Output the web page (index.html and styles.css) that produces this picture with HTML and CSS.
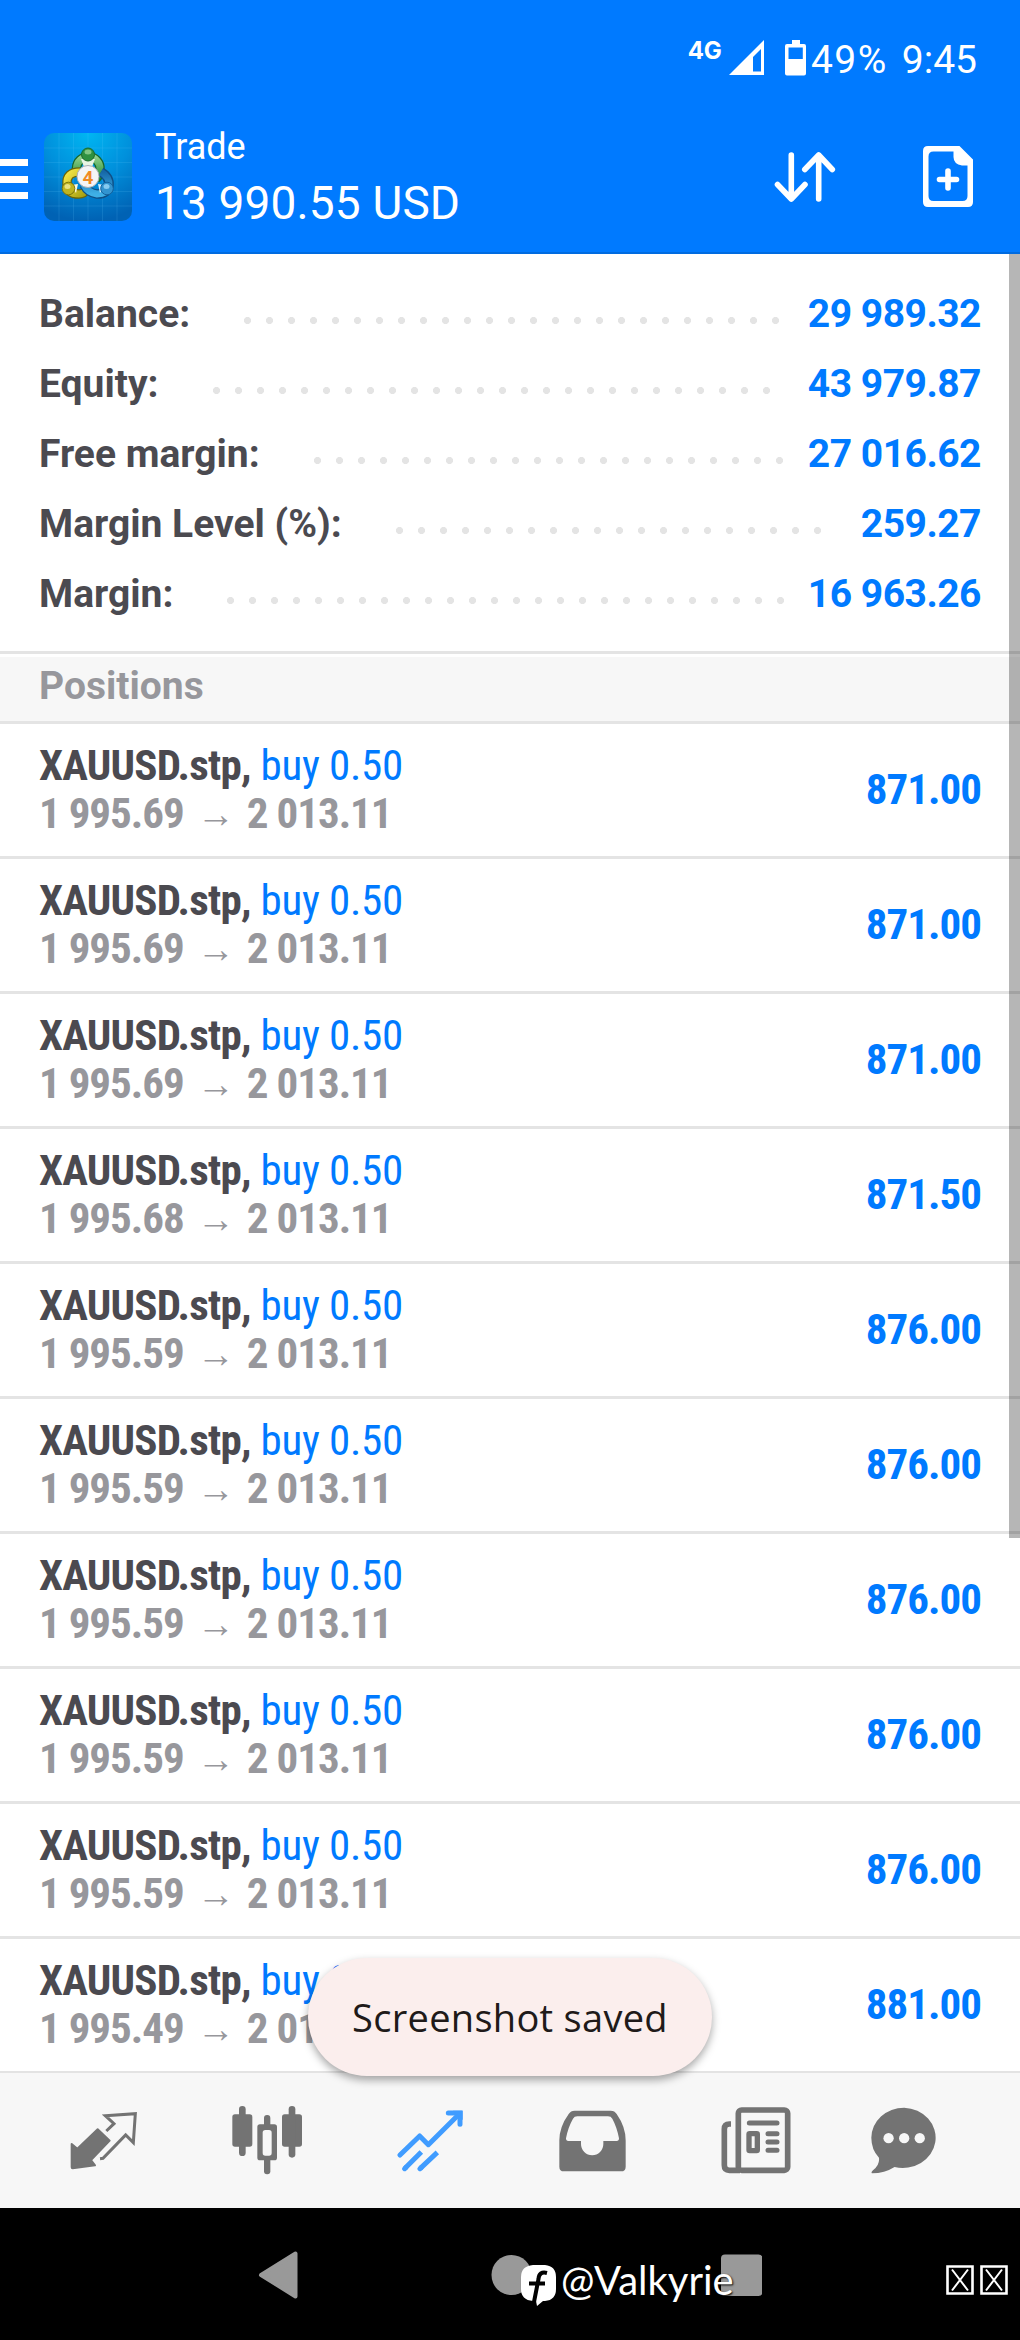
FILE: index.html
```
<!DOCTYPE html>
<html lang="en">
<head>
    <meta charset="UTF-8">
    <meta name="viewport" content="width=device-width, initial-scale=1.0">
    <title>Trade</title>
    <link rel="stylesheet" href="styles.css">
</head>
<body>
    <div class="phone">
        <div class="status-bar">
            <span class="network">4G</span>
            <svg class="signal" width="36" height="36" viewBox="0 0 36 36">
                <path fill="#fff" fill-rule="evenodd" d="M0 35L35 0V35ZM24 31.5H32V9L24 17Z"/>
            </svg>
            <svg class="battery" width="21" height="36" viewBox="0 0 21 36">
                <path fill="#fff" fill-rule="evenodd" d="M7 0H15V4H19Q21 4 21 6V33.500Q21 35.500 19 35.500H2Q0 35.500 0 33.500V6Q0 4 2 4H7ZM3.500 7.500V19H17.800V7.500Z"/>
            </svg>
            <span class="percent">49%</span>
            <span class="clock">9:45</span>
        </div>

        <header>
            <div class="hamburger"><i></i><i></i><i></i></div>
            <svg class="logo" width="88" height="88" viewBox="0 0 88 88">
                <defs>
                    <radialGradient id="sky" cx=".5" cy="0" r="1">
                        <stop offset="0" stop-color="#00b6f2"/>
                        <stop offset=".5" stop-color="#0090dc"/>
                        <stop offset="1" stop-color="#0062b4"/>
                    </radialGradient>
                    <linearGradient id="green" x2="0" y2="1">
                        <stop offset="0" stop-color="#8fd08a"/>
                        <stop offset="1" stop-color="#1f8a35"/>
                    </linearGradient>
                    <linearGradient id="yellow" x2="1" y2="1">
                        <stop offset="0" stop-color="#f3e545"/>
                        <stop offset="1" stop-color="#a8a012"/>
                    </linearGradient>
                    <linearGradient id="blue" x2="0" y2="1">
                        <stop offset="0" stop-color="#1668a8"/>
                        <stop offset="1" stop-color="#3fb0e6"/>
                    </linearGradient>
                </defs>
                <rect width="88" height="88" rx="10" fill="url(#sky)"/>
                <path d="M15 0V88M29.500 0V88M44 0V88M58.500 0V88M73 0V88M0 15H88M0 29.500H88M0 44H88M0 58.500H88M0 73H88" stroke="#6cd0ff" stroke-opacity=".15" fill="none"/>
                <path d="M32.500 40V35A11.500 11.500 0 1 1 56 36Q56 42 52 46" fill="none" stroke="#17662a" stroke-width="9.500"/>
                <path d="M32.500 40V35A11.500 11.500 0 1 1 56 36Q56 42 52 46" fill="none" stroke="url(#green)" stroke-width="7"/>
                <path d="M36 39Q22 39 23 51Q23 61 35 61Q40 61 42 57" fill="none" stroke="#6b6508" stroke-width="9.500"/>
                <path d="M36 39Q22 39 23 51Q23 61 35 61Q40 61 42 57" fill="none" stroke="url(#yellow)" stroke-width="7"/>
                <path d="M57 39Q66 44 65 53Q63 61 53 61Q44 60 40 52" fill="none" stroke="#0f4f85" stroke-width="9.500"/>
                <path d="M57 39Q66 44 65 53Q63 61 53 61Q44 60 40 52" fill="none" stroke="url(#blue)" stroke-width="7"/>
                <path d="M40 34L37 26H51L48 34Z" fill="#e8f5e4"/>
                <path d="M27 52L34 51L32 60Z" fill="#fffbe0"/>
                <path d="M61 52L54 51L56 60Z" fill="#d8f0ff"/>
                <circle cx="44" cy="21.500" r="6.500" fill="#2f9140" stroke="#1a6a2a"/>
                <ellipse cx="44" cy="19" rx="3.500" ry="2.500" fill="#a2dba0" opacity=".7"/>
                <circle cx="24.500" cy="55.500" r="6.300" fill="#bdb420" stroke="#7b750c"/>
                <ellipse cx="23.500" cy="53.500" rx="3" ry="2.500" fill="#f4ee9a" opacity=".8"/>
                <circle cx="63" cy="55.500" r="6.300" fill="#3294d0" stroke="#14619c"/>
                <ellipse cx="62.500" cy="53.500" rx="3" ry="2.500" fill="#9bd7f7" opacity=".8"/>
                <circle cx="44" cy="43.500" r="11" fill="#f4f4f6" stroke="#a9adb3"/>
                <text class="logo-number" x="44" y="50.500">4</text>
            </svg>
            <div class="title">
                <div class="title-name">Trade</div>
                <div class="title-profit">13 990.55 USD</div>
            </div>
            <svg class="sort" width="62" height="52" viewBox="774 151 62 52" fill="none" stroke="#fff" stroke-width="5.600" stroke-linecap="round" stroke-linejoin="round">
                <path d="M791.300 155V199M777.500 184.500L791.300 199L805 184.500"/>
                <path d="M818.700 199V155M804.800 169.500L818.700 155L832.300 169.500"/>
            </svg>
            <svg class="new-order" width="50" height="61" viewBox="0 0 50 61">
                <path fill="#fff" fill-rule="evenodd" d="M5 0H36.500L50 13.500V56Q50 61 45 61H5Q0 61 0 56V5Q0 0 5 0ZM10.500 5.500Q5.500 5.500 5.500 10.500V50Q5.500 55 10.500 55H39.500Q44.500 55 44.500 50V19.500H39Q30.500 18 30.500 11V5.500Z"/>
                <path d="M25 25V42M16.500 33.500H33.500" stroke="#fff" stroke-width="5.600" stroke-linecap="round"/>
            </svg>
        </header>

        <main>
            <div class="account">
                <div class="account-row"><span>Balance:</span><div class="leader"><div class="dots"></div></div><b>29 989.32</b></div>
                <div class="account-row"><span>Equity:</span><div class="leader"><div class="dots"></div></div><b>43 979.87</b></div>
                <div class="account-row"><span>Free margin:</span><div class="leader"><div class="dots"></div></div><b>27 016.62</b></div>
                <div class="account-row"><span>Margin Level (%):</span><div class="leader"><div class="dots"></div></div><b>259.27</b></div>
                <div class="account-row"><span>Margin:</span><div class="leader"><div class="dots"></div></div><b>16 963.26</b></div>
            </div>
            <h2>Positions</h2>
            <div id="positions"></div>
            <div class="scrollbar"></div>
            <div class="toast">Screenshot saved</div>
        </main>

        <nav class="tabs">
            <div class="tab">
                <svg width="68" height="60" viewBox="89 122 204 180">
                    <path fill="#737373" stroke="#737373" stroke-width="6" stroke-linejoin="round" d="M172 177L208 211L152 269L164 285L97 294Q94 294 94 291V221L111 235Z"/>
                    <path fill="none" stroke="#737373" stroke-width="9" d="M198 182L221 160L195 136L285 130L279 217L256 194L188 264L179 265"/>
                </svg>
            </div>
            <div class="tab">
                <svg width="70" height="69" viewBox="573 107 210 207">
                    <g fill="#737373">
                        <rect x="574" y="132" width="60" height="97" rx="8"/>
                        <rect x="594" y="107" width="20" height="150" rx="10"/>
                        <rect x="723" y="132" width="60" height="97" rx="8"/>
                        <rect x="743" y="107" width="20" height="155" rx="10"/>
                        <rect x="649" y="162" width="59" height="108" rx="8"/>
                        <rect x="669" y="134" width="19" height="178" rx="9"/>
                    </g>
                    <rect x="665" y="179" width="27" height="77" rx="8" fill="#f7f7f7"/>
                </svg>
            </div>
            <div class="tab">
                <svg width="66" height="62" viewBox="1068 115 198 186" fill="none" stroke="#409cff" stroke-width="15">
                    <path stroke-linecap="round" stroke-linejoin="round" d="M1077 250L1136 193L1162 219L1254 128"/>
                    <path stroke-linecap="round" d="M1222 124H1257V158"/>
                    <path d="M1236 117H1265V145Z" fill="#409cff" stroke="none"/>
                    <path d="M1092 290L1141 241M1138 290L1189 242"/>
                    <path stroke-linecap="round" d="M1091 291L1094 288M1137 291L1140 288"/>
                </svg>
            </div>
            <div class="tab">
                <svg width="67" height="62" viewBox="117 114 201 186">
                    <path fill="#737373" fill-rule="evenodd" d="M164 116H272Q284 116 290 126Q317 165 317 205V284Q317 298 303 298H132Q118 298 118 284V205Q118 165 146 126Q152 116 164 116ZM172 133Q163 133 159 140Q144 166 138 199Q138 207 145 207H183V216A33 33 0 0 0 250 216V207H290Q297 207 297 199Q291 166 277 140Q273 133 264 133Z"/>
                </svg>
            </div>
            <div class="tab">
                <svg width="70" height="67" viewBox="603 107 210 201" fill="none" stroke="#737373" stroke-width="17">
                    <rect x="655" y="116" width="148" height="181" rx="10"/>
                    <path d="M633 158H628Q613 158 613 173V282Q613 297 628 297H660"/>
                    <path stroke-width="15" stroke-linecap="round" d="M688 155H771M744 187H771M744 212H771M744 237H771"/>
                    <rect x="687" y="187" width="25" height="51" rx="2" stroke-width="16"/>
                </svg>
            </div>
            <div class="tab">
                <svg width="66" height="67" viewBox="1049 107 199 200">
                    <path fill="#737373" d="M1149 108A99 91 0 1 1 1120 287Q1090 306 1052 306Q1048 303 1055 297Q1076 280 1073 259Q1050 235 1050 199A99 91 0 0 1 1149 108Z"/>
                    <g fill="#f7f7f7"><circle cx="1102" cy="200" r="15.500"/><circle cx="1149" cy="200" r="15.500"/><circle cx="1196" cy="200" r="15.500"/></g>
                </svg>
            </div>
        </nav>

        <footer>
            <svg class="nav-buttons" width="504" height="50" viewBox="257 2253 504 50" fill="#999">
                <path stroke="#999" stroke-width="4" stroke-linejoin="round" d="M260 2278L294.500 2256.500V2299.500Z"/>
                <circle cx="510.500" cy="2278" r="20"/>
                <rect x="720" y="2257.500" width="41.500" height="41.500" rx="4"/>
            </svg>
            <div class="credit">
                <svg width="36" height="42" viewBox="0 0 36 42">
                    <path fill="#fff" d="M12 0H24Q35 1 35 12V24Q35 35 24 36H22L16 41L15 36H12Q0 35 0 24V12Q0 1 12 0Z"/>
                    <path fill="none" stroke="#000" stroke-width="4" d="M26 8Q18 6 17.500 14L13 37M8 18.500H24"/>
                </svg>
                <span>@Valkyrie</span>
            </div>
            <svg class="missing" width="62" height="30" viewBox="0 0 62 30" fill="none" stroke="#fff">
                <path stroke-width="2.600" d="M1.500 1.500H26.500V28.500H1.500ZM35.500 1.500H60.500V28.500H35.500Z"/>
                <path stroke-width="2" d="M6 4.500L22 25.500M22 4.500L6 25.500M40 4.500L56 25.500M56 4.500L40 25.500"/>
            </svg>
        </footer>
    </div>

    <script>
        const positions = [
            { open: "1 995.69", profit: "871.00" },
            { open: "1 995.69", profit: "871.00" },
            { open: "1 995.69", profit: "871.00" },
            { open: "1 995.68", profit: "871.50" },
            { open: "1 995.59", profit: "876.00" },
            { open: "1 995.59", profit: "876.00" },
            { open: "1 995.59", profit: "876.00" },
            { open: "1 995.59", profit: "876.00" },
            { open: "1 995.59", profit: "876.00" },
            { open: "1 995.49", profit: "881.00" }
        ];

        const positionsDiv = document.getElementById("positions");

        positions.forEach(item => {
            const row = document.createElement("div");
            row.className = "position";
            row.innerHTML = `
                <div class="position-info">
                    <div class="symbol"><b>XAUUSD.stp,</b> <span class="side">buy 0.50</span></div>
                    <div class="prices">
                        <span>${item.open}</span>
                        <span class="arrow">→</span>
                        <span>2 013.11</span>
                    </div>
                </div>
                <div class="profit">${item.profit}</div>
            `;
            positionsDiv.appendChild(row);
        });
    </script>
</body>
</html>
```

FILE: styles.css
```
* {
    box-sizing: border-box;
}

body {
    margin: 0;
    background-color: #fff;
    font-family: Roboto, "Liberation Sans", sans-serif;
    color: #4b4a50;
}

svg {
    display: block;
    flex: none;
}

.phone {
    display: flex;
    flex-direction: column;
    width: 1020px;
    height: 2340px;
    overflow: hidden;
}

/* Android status bar */
.status-bar {
    display: flex;
    align-items: flex-start;
    height: 119px;
    padding: 40px 43px 0 0;
    justify-content: flex-end;
    background-color: #007aff;
    color: #fff;
    font-weight: 400;
    font-size: 39px;
    line-height: 41px;
    white-space: nowrap;
}

.network {
    font-family: Inter, sans-serif;
    font-weight: 700;
    font-size: 24px;
    line-height: 21px;
    margin-right: 7px;
}

.signal {
    margin-right: 20px;
}

.battery {
    margin-right: 5px;
}

.percent {
    letter-spacing: 1.5px;
    margin-right: 14px;
}

/* App header */
header {
    display: flex;
    align-items: flex-start;
    height: 135px;
    background-color: #007aff;
    border-bottom: 2px solid #006be0;
    color: #fff;
}

.hamburger {
    display: flex;
    flex-direction: column;
    gap: 9.500px;
    width: 28px;
    margin: 40px 16px 0 0;
}

.hamburger i {
    height: 7px;
    background-color: #fff;
}

.logo {
    margin-top: 14px;
}

.logo-number {
    font-size: 19px;
    font-weight: 700;
    fill: #f08a24;
    text-anchor: middle;
}

.title {
    flex: 1;
    padding: 3px 0 0 23px;
    white-space: nowrap;
}

.title-name {
    font-size: 36px;
    line-height: 51px;
}

.title-profit {
    font-size: 46px;
    line-height: 60px;
    letter-spacing: 0.15px;
}

.sort {
    margin: 32px 87px 0 0;
}

.new-order {
    margin: 27px 47px 0 0;
}

/* Account summary */
main {
    position: relative;
    height: 1817px;
}

.account {
    padding: 25px 39px 22px;
    border-bottom: 3px solid #e4e4e4;
    margin-bottom: 3px;
}

.account-row {
    display: flex;
    font-size: 39px;
    line-height: 70px;
    font-weight: 700;
    white-space: nowrap;
}

.account-row b {
    color: #007aff;
    letter-spacing: -0.5px;
    font-weight: 700;
}

.leader {
    flex: 1;
    padding-top: 38px;
    margin: 0 8px 0 54px;
}

/* only whole dots are shown */
.dots {
    width: round(down, 100%, 22px);
    height: 7px;
    background: radial-gradient(circle at 3.5px 3.5px, #e4e4e4 3.200px, transparent 3.900px) 0 0 / 22px 7px repeat-x;
}

h2 {
    height: 67px;
    margin: 0;
    padding-left: 39px;
    background-color: #f7f7f7;
    border-bottom: 3px solid #e4e4e4;
    color: #97979c;
    font-size: 39px;
    line-height: 58px;
}

/* Positions list */
.position {
    display: flex;
    justify-content: space-between;
    height: 135px;
    padding: 17px 39px 0 39px;
    border-bottom: 3px solid #e4e4e4;
    font-family: "Roboto Condensed", Roboto, sans-serif;
    font-stretch: 75%;
    font-size: 43px;
    line-height: 48px;
    white-space: nowrap;
}

.position:last-child {
    height: 132px;
    border-bottom: none;
}

.symbol b {
    letter-spacing: -0.8px;
}

.side {
    color: #007aff;
    letter-spacing: -0.3px;
}

.prices {
    display: flex;
    color: #97979c;
    font-weight: 700;
    letter-spacing: -1px;
}

.arrow {
    width: 63px;
    padding-top: 1px;
    text-align: center;
    font-family: "Liberation Sans", sans-serif;
    font-size: 38px;
    font-weight: 400;
}

.profit {
    padding-top: 24px;
    color: #007aff;
    font-weight: 700;
    letter-spacing: -1px;
}

.scrollbar {
    position: absolute;
    top: 0;
    right: 0;
    width: 11px;
    height: 1284px;
    background-color: rgba(0, 0, 0, 0.285);
}

.toast {
    position: absolute;
    left: 308px;
    bottom: -5px;
    width: 404px;
    height: 118px;
    border-radius: 59px;
    background-color: #fbeeed;
    box-shadow: 0 4px 9px rgba(0, 0, 0, 0.35);
    color: #201a19;
    font-family: "Open Sans", sans-serif;
    font-size: 38px;
    letter-spacing: 0.3px;
    line-height: 119px;
    text-align: center;
    white-space: nowrap;
}

/* Bottom tabs */
.tabs {
    display: flex;
    height: 137px;
    padding-left: 22px;
    background-color: #f7f7f7;
    border-top: 2px solid #e3e3e3;
}

.tab {
    display: flex;
    align-items: center;
    justify-content: center;
    width: 163px;
}

.tab:last-child {
    width: 133px;
}

/* System navigation */
footer {
    position: relative;
    height: 132px;
    padding: 42px 0 0 258px;
    background-color: #000;
}

.credit {
    position: absolute;
    left: 521px;
    top: 57px;
    display: flex;
    gap: 4px;
    color: #fff;
    font-family: Lato, sans-serif;
    font-size: 40px;
    line-height: 31px;
    text-shadow: 1px 1px 2px #000;
}

.missing {
    position: absolute;
    left: 946px;
    top: 57px;
}
```
